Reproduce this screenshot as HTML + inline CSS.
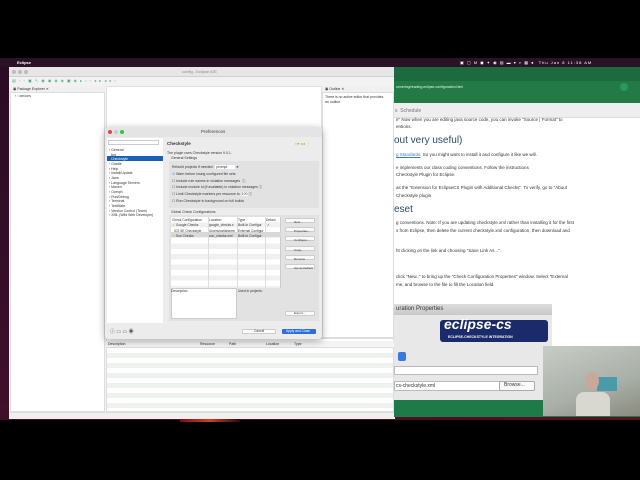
<!DOCTYPE html>
<html><head><meta charset="utf-8"><style>
*{margin:0;padding:0;box-sizing:border-box}
body{width:640px;height:480px;background:#000;position:relative;overflow:hidden;font-family:"Liberation Sans",sans-serif;font-size:4px;color:#333}
.a{position:absolute}
.t{position:absolute;white-space:nowrap}
</style></head><body>
<div class="a" style="left:0;top:58px;width:640px;height:362px;background:linear-gradient(160deg,#2a0c24 0%,#3a0f2a 50%,#5a1020 100%)"></div>
<div class="a" style="left:180px;top:414px;width:60px;height:8px;background:linear-gradient(90deg,#7a1010,#d04020,#300808)"></div>
<div class="a" style="left:0;top:58px;width:640px;height:9px;background:#2b1224"></div>
<div class="t" style="left:6px;top:59px;color:#fff;font-size:5px"></div>
<div class="t" style="left:17px;top:60px;color:#fff;font-weight:bold;font-size:4px">Eclipse</div>
<div class="t" style="left:460px;top:60px;color:#fff;font-size:4px;letter-spacing:1px">▣ ▢ M ◼ ✦ ◉ ▤ ▬ ▾ ⌕ ▦ ● &nbsp;Thu Jan 8 11:38 AM</div>
<div class="a" style="left:9px;top:67px;width:386px;height:352px;background:#f2f2f2;border-radius:3px 3px 0 0"></div>
<div class="a" style="left:9px;top:67px;width:386px;height:10px;background:#e6e6e6;border-bottom:1px solid #d0d0d0"></div>
<div class="a" style="left:12px;top:70px;width:4px;height:4px;border-radius:50%;background:#bbb"></div>
<div class="a" style="left:18px;top:70px;width:4px;height:4px;border-radius:50%;background:#bbb"></div>
<div class="a" style="left:24px;top:70px;width:4px;height:4px;border-radius:50%;background:#bbb"></div>
<div class="t" style="left:182px;top:69px;color:#888">config - Eclipse IDE</div>
<div class="t" style="left:12px;top:78px;color:#4a7;font-size:4px;letter-spacing:1px">▤ ▫ ▫ ▣ ↖ ◉ ◉ ◈ ◈ ▣ ◈ ▸ ▫ ▫ ◂ ▸ ◂ ▸ ▫</div>
<div class="a" style="left:10px;top:86px;width:95px;height:326px;background:#fff;border:1px solid #ddd"></div>
<div class="a" style="left:10px;top:86px;width:95px;height:7px;background:#f0f0f0;border-bottom:1px solid #ddd"></div>
<div class="t" style="left:13px;top:87px;font-size:3.5px">▣ Package Explorer ✕</div>
<div class="t" style="left:15px;top:94px;font-size:3.5px">› ▫ omoors</div>
<div class="a" style="left:106px;top:86px;width:216px;height:252px;background:#fff;border:1px solid #e0e0e0"></div>
<div class="a" style="left:322px;top:86px;width:72px;height:252px;background:#fff;border:1px solid #ddd"></div>
<div class="a" style="left:322px;top:86px;width:72px;height:7px;background:#f0f0f0;border-bottom:1px solid #ddd"></div>
<div class="t" style="left:325px;top:87px;font-size:3.5px">▣ Outline ✕</div>
<div class="t" style="left:325px;top:95px;font-size:3.5px;line-height:4.5px">There is no active editor that provides<br>an outline.</div>
<div class="a" style="left:106px;top:338px;width:288px;height:74px;background:#fff;border:1px solid #ddd"></div>
<div class="a" style="left:106px;top:341px;width:288px;height:7px;background:#f4f4f4;border-bottom:1px solid #ddd"></div>
<div class="t" style="left:108px;top:342px;font-size:3.5px">Description</div>
<div class="t" style="left:200px;top:342px;font-size:3.5px">Resource</div>
<div class="t" style="left:229px;top:342px;font-size:3.5px">Path</div>
<div class="t" style="left:266px;top:342px;font-size:3.5px">Location</div>
<div class="t" style="left:294px;top:342px;font-size:3.5px">Type</div>
<div class="a" style="left:107px;top:348px;width:286px;height:60px;background:repeating-linear-gradient(#fff 0 5px,#eef2ee 5px 10px)"></div>
<div class="a" style="left:9px;top:412px;width:386px;height:7px;background:#efefef;border-top:1px solid #ddd"></div>
<div class="a" style="left:394px;top:67px;width:246px;height:350px;background:#fff"></div>
<div class="a" style="left:394px;top:67px;width:246px;height:14px;background:#1c6b3e"></div>
<div class="a" style="left:394px;top:81px;width:246px;height:13px;background:#237a47"></div>
<div class="t" style="left:396px;top:85px;color:#e8f5ec;font-size:3.5px">onnering/reading-eclipse-configuration.html</div>
<div class="a" style="left:620px;top:83px;width:8px;height:8px;border-radius:50%;background:#2a9a5a"></div>
<div class="a" style="left:394px;top:94px;width:246px;height:9px;background:#237a47"></div>
<div class="a" style="left:394px;top:103px;width:246px;height:15px;background:#eeeeee;border-bottom:1px solid #ddd"></div>
<div class="t" style="left:395px;top:108px;color:#777;font-size:5px">s &nbsp;Schedule</div>
<div class="t" style="left:396px;top:117px;color:#333;font-size:4.5px">e" Now when you are editing java source code, you can invoke "Source | Format" to</div>
<div class="t" style="left:396px;top:124px;color:#333;font-size:4.5px">entions.</div>
<div class="t" style="left:394px;top:135px;color:#2a4a6a;font-size:10px">out very useful)</div>
<div class="t" style="left:396px;top:152px;color:#333;font-size:4.5px"><span style="color:#3a7ac0;text-decoration:underline">g Standards</span>. So you might want to install it and configure it like we will.</div>
<div class="t" style="left:396px;top:165px;color:#333;font-size:4.5px">e implements our class coding conventions. Follow the instructions</div>
<div class="t" style="left:396px;top:172px;color:#333;font-size:4.5px">Checkstyle Plugin for Eclipse.</div>
<div class="t" style="left:396px;top:185px;color:#333;font-size:4.5px">as the "Extension for EclipseCS Plugin with Additional Checks". To verify, go to "About</div>
<div class="t" style="left:396px;top:193px;color:#333;font-size:4.5px">Checkstyle plugin.</div>
<div class="t" style="left:394px;top:204px;color:#2a4a6a;font-size:10px">eset</div>
<div class="t" style="left:396px;top:220px;color:#333;font-size:4.5px">g conventions. Note: If you are updating checkstyle.xml rather than installing it for the first</div>
<div class="t" style="left:396px;top:228px;color:#333;font-size:4.5px">s from Eclipse, then delete the current checkstyle.xml configuration, then download and</div>
<div class="t" style="left:396px;top:248px;color:#333;font-size:4.5px">ht clicking on the link and choosing "Save Link As...".</div>
<div class="t" style="left:396px;top:274px;color:#333;font-size:4.5px">click "New.." to bring up the "Check Configuration Properties" window. Select "External</div>
<div class="t" style="left:396px;top:282px;color:#333;font-size:4.5px">me, and browse to the file to fill the Location field.</div>
<div class="a" style="left:394px;top:304px;width:158px;height:96px;background:#e8e8e8"></div>
<div class="a" style="left:394px;top:304px;width:158px;height:11px;background:linear-gradient(#ddd,#c8c8c8)"></div>
<div class="t" style="left:396px;top:306px;color:#333;font-size:6px">uration Properties</div>
<div class="a" style="left:440px;top:320px;width:108px;height:22px;background:#1a2a6a;border-radius:3px"></div>
<div class="t" style="left:444px;top:316px;color:#fff;font-size:14px;font-weight:bold;font-style:italic">eclipse-cs</div>
<div class="t" style="left:448px;top:335px;color:#fff;font-size:3.5px;font-weight:bold">ECLIPSE-CHECKSTYLE INTEGRATION</div>
<div class="a" style="left:398px;top:352px;width:8px;height:9px;background:#3a7ae0;border-radius:2px"></div>
<div class="a" style="left:394px;top:366px;width:144px;height:9px;background:#fff;border:1px solid #bbb"></div>
<div class="a" style="left:394px;top:381px;width:108px;height:10px;background:#fff;border:1px solid #bbb"></div>
<div class="t" style="left:396px;top:383px;font-size:5px">cs-checkstyle.xml</div>
<div class="a" style="left:499px;top:381px;width:36px;height:10px;background:#fafafa;border:1px solid #aaa;border-radius:2px"></div>
<div class="t" style="left:504px;top:382px;font-size:5px">Browse...</div>
<div class="a" style="left:394px;top:400px;width:246px;height:17px;background:#1f7a4a"></div>
<div class="a" style="left:543px;top:346px;width:97px;height:70px;background:linear-gradient(160deg,#c8ccc6,#a9b0a8 60%,#8a8a80)"></div>
<div class="a" style="left:597px;top:377px;width:20px;height:14px;background:#4a9aa8"></div>
<div class="a" style="left:585px;top:372px;width:14px;height:18px;border-radius:50%;background:#c9a89a"></div>
<div class="a" style="left:576px;top:392px;width:34px;height:24px;border-radius:8px 8px 0 0;background:#d8d8d0"></div>
<div class="a" style="left:105px;top:127px;width:217px;height:212px;background:#ececec;border-radius:3px;box-shadow:0 2px 8px rgba(0,0,0,.35)"></div>
<div class="a" style="left:105px;top:127px;width:217px;height:10px;background:#e4e4e4;border-radius:3px 3px 0 0"></div>
<div class="a" style="left:108px;top:130px;width:4px;height:4px;border-radius:50%;background:#e0443e"></div>
<div class="a" style="left:114px;top:130px;width:4px;height:4px;border-radius:50%;background:#ccc"></div>
<div class="a" style="left:120px;top:130px;width:4px;height:4px;border-radius:50%;background:#2ac840"></div>
<div class="t" style="left:201px;top:129px;color:#444;font-size:4.5px">Preferences</div>
<div class="a" style="left:107px;top:138px;width:56px;height:185px;background:#fff"></div>
<div class="a" style="left:108px;top:140px;width:51px;height:5px;border:1px solid #ccc"></div>
<div class="a" style="left:107px;top:156px;width:56px;height:5px;background:#1a5fb4"></div>
<div class="t" style="left:109px;top:148px;font-size:3.5px;line-height:4.67px">› General<br>&nbsp; Ant<br><span style="color:#fff">&nbsp; Checkstyle</span><br>› Gradle<br>› Help<br>› Install/Update<br>› Java<br>› Language Servers<br>› Maven<br>› Oomph<br>› Run/Debug<br>› Terminal<br>› TextMate<br>› Version Control (Team)<br>› XML (Wild Web Developer)</div>
<div class="t" style="left:167px;top:141px;font-size:4.5px;font-weight:bold;color:#333">Checkstyle</div>
<div class="t" style="left:295px;top:141px;font-size:4px;color:#aa3">◐▾ ◂ ▸ ⋮</div>
<div class="t" style="left:167px;top:151px;font-size:3.5px">The plugin uses Checkstyle version 9.0.1.</div>
<div class="t" style="left:171px;top:156px;font-size:3.5px">General Settings</div>
<div class="a" style="left:169px;top:161px;width:150px;height:47px;background:#e2e2e2"></div>
<div class="t" style="left:172px;top:164px;font-size:3.5px;line-height:6.8px">Rebuild projects if needed: &nbsp;<span style="background:#fff;padding:0 8px 0 1px">prompt</span> <span style="color:#3a7ae0">■</span><br><span style="color:#3a7ae0">☑</span> Warn before losing configured file sets<br>☐ Include rule names in violation messages &nbsp;ⓘ<br>☐ Include module id (if available) in violation messages ⓘ<br>☐ Limit Checkstyle markers per resource to &nbsp;<span style="background:#fff">100</span> ⓘ<br>☐ Run Checkstyle in background on full builds</div>
<div class="t" style="left:171px;top:210px;font-size:3.5px">Global Check Configurations</div>
<div class="a" style="left:169px;top:215px;width:150px;height:106px;background:#e2e2e2"></div>
<div class="a" style="left:171px;top:217px;width:110px;height:71px;background:repeating-linear-gradient(#fff 0 5.3px,#f0f0f0 5.3px 10.6px);border-right:1px solid #ccc"></div>
<div class="a" style="left:208px;top:217px;width:1px;height:71px;background:#ddd"></div>
<div class="a" style="left:237px;top:217px;width:1px;height:71px;background:#ddd"></div>
<div class="a" style="left:265px;top:217px;width:1px;height:71px;background:#ddd"></div>
<div class="a" style="left:171px;top:232px;width:110px;height:5px;background:#d8d8d8"></div>
<div class="t" style="left:172px;top:218px;font-size:3.3px;line-height:5.3px">Check Configuration<br><span style="color:#ca0">⚠</span> Google Checks<br>&nbsp;&nbsp;ICS 5E Checkstyle<br><span style="color:#ca0">⚠</span> Sun Checks</div>
<div class="t" style="left:209px;top:218px;font-size:3.3px;line-height:5.3px">Location<br>google_checks.x<br>/Users/carlahome<br>sun_checks.xml</div>
<div class="t" style="left:238px;top:218px;font-size:3.3px;line-height:5.3px">Type<br>Built-In Configur<br>External Configur<br>Built-In Configur</div>
<div class="t" style="left:266px;top:218px;font-size:3.3px;line-height:5.3px">Defaul<br>&nbsp;✓</div>
<div class="a" style="left:171px;top:288px;width:66px;height:31px;background:#fff;border:1px solid #ccc"></div>
<div class="t" style="left:171px;top:289px;font-size:3.3px">Description</div>
<div class="t" style="left:238px;top:289px;font-size:3.3px">Used in projects:</div>
<div class="a" style="left:285px;top:218px;width:30px;height:5px;background:#fafafa;border:1px solid #ccc;border-radius:1px"></div>
<div class="a" style="left:285px;top:227px;width:30px;height:5px;background:#fafafa;border:1px solid #ccc;border-radius:1px"></div>
<div class="a" style="left:285px;top:236px;width:30px;height:5px;background:#fafafa;border:1px solid #ccc;border-radius:1px"></div>
<div class="a" style="left:285px;top:246px;width:30px;height:5px;background:#fafafa;border:1px solid #ccc;border-radius:1px"></div>
<div class="a" style="left:285px;top:255px;width:30px;height:5px;background:#fafafa;border:1px solid #ccc;border-radius:1px"></div>
<div class="a" style="left:285px;top:264px;width:30px;height:5px;background:#fafafa;border:1px solid #ccc;border-radius:1px"></div>
<div class="a" style="left:285px;top:311px;width:30px;height:5px;background:#fafafa;border:1px solid #ccc;border-radius:1px"></div>
<div class="t" style="left:294px;top:218px;font-size:3px;line-height:9.2px">New...<br>Properties...<br>Configure...<br>Copy...<br>Remove<br>Set as Default</div>
<div class="t" style="left:294px;top:311px;font-size:3px">Export...</div>
<div class="t" style="left:110px;top:328px;font-size:5px;color:#555">ⓘ ▭ ▭ ◉</div>
<div class="a" style="left:242px;top:329px;width:34px;height:5px;background:#fff;border:1px solid #ccc;border-radius:1px"></div>
<div class="t" style="left:254px;top:329px;font-size:3.3px">Cancel</div>
<div class="a" style="left:282px;top:329px;width:34px;height:5px;background:#2a6fe0;border-radius:1px"></div>
<div class="t" style="left:286px;top:329px;font-size:3.3px;color:#fff">Apply and Close</div>
</body></html>
